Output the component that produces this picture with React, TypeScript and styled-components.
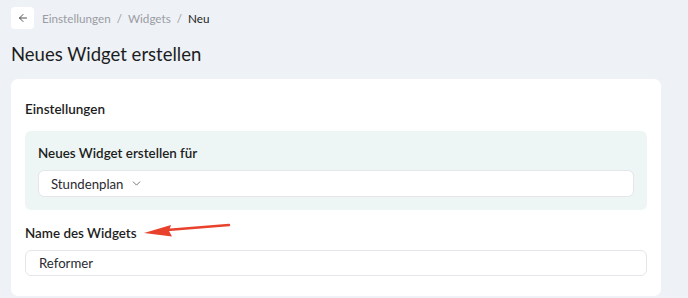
import styled, { createGlobalStyle } from 'styled-components';
import { ArrowLeft, ChevronDown } from 'lucide-react';

const GlobalStyle = createGlobalStyle`
  body {
    margin: 0;
    background: #eef1f6;
    font-family: Lato, "Noto Sans", sans-serif;
    color: #1c1d21;
  }
`;

const Page = styled.div`
  padding: 7px 11px 0;
`;

const TopBar = styled.div`
  display: flex;
  align-items: center;
  gap: 8px;
  height: 22px;
`;

const BackButton = styled.button`
  width: 23px;
  height: 22px;
  border: none;
  border-radius: 4px;
  background: #ffffff;
  display: flex;
  align-items: center;
  justify-content: center;
  padding: 0;
  color: #3a3b40;
`;

const Crumbs = styled.nav`
  display: flex;
  align-items: center;
  gap: 6px;
  font-size: 11.7px;
  color: #9a9ca3;
`;

const Crumb = styled.span<{ $current?: boolean }>`
  color: ${({ $current }) => ($current ? '#1c1d21' : '#9a9ca3')};
`;

const Title = styled.h1`
  margin: 11px 0 0;
  font-size: 18.5px;
  font-weight: 400;
  line-height: 28px;
`;

const Card = styled.section`
  margin-top: 11px;
  width: 650px;
  background: #ffffff;
  border-radius: 7px;
  padding: 21px 14px 20px;
  box-sizing: border-box;
`;

const SectionTitle = styled.h2`
  margin: 0;
  font-size: 13.5px;
  font-weight: 600;
  line-height: 18px;
`;

const Panel = styled.div`
  margin-top: 13px;
  background: #eef6f5;
  border-radius: 6px;
  padding: 13px;
`;

const Label = styled.div`
  font-size: 13.4px;
  font-weight: 600;
  line-height: 18px;
  display: flex;
  align-items: center;
`;

const Select = styled.div`
  margin-top: 8px;
  height: 27px;
  box-sizing: border-box;
  background: #ffffff;
  border: 1px solid #e4e6ea;
  border-radius: 6px;
  padding: 0 12px;
  display: flex;
  align-items: center;
  gap: 7px;
  font-size: 13.2px;
  color: #2a2b30;
`;

const Field = styled.div`
  margin-top: 14px;
`;

const Input = styled.div`
  margin-top: 8px;
  height: 26px;
  box-sizing: border-box;
  background: #ffffff;
  border: 1px solid #e4e6ea;
  border-radius: 6px;
  padding: 0 13px;
  display: flex;
  align-items: center;
  font-size: 13.2px;
  color: #2a2b30;
`;

const Pointer = styled.svg`
  margin-left: 6px;
  margin-top: -4px;
`;

const RedArrow = () => (
  <Pointer width="90" height="16" viewBox="0 0 90 16">
    <path d="M86 2 L24 7" stroke="#e8412c" strokeWidth="2.4" strokeLinecap="round" />
    <path d="M1 10 L28 2 L26 8 L29 13.5 Z" fill="#e8412c" />
  </Pointer>
);

const App = () => (
  <>
    <GlobalStyle />
    <Page>
      <TopBar>
        <BackButton>
          <ArrowLeft size={12} strokeWidth={1.8} />
        </BackButton>
        <Crumbs>
          <Crumb>Einstellungen</Crumb>
          <span>/</span>
          <Crumb>Widgets</Crumb>
          <span>/</span>
          <Crumb $current>Neu</Crumb>
        </Crumbs>
      </TopBar>
      <Title>Neues Widget erstellen</Title>
      <Card>
        <SectionTitle>Einstellungen</SectionTitle>
        <Panel>
          <Label>Neues Widget erstellen für</Label>
          <Select>
            Stundenplan
            <ChevronDown size={13} strokeWidth={1.5} color="#55575d" />
          </Select>
        </Panel>
        <Field>
          <Label>
            Name des Widgets
            <RedArrow />
          </Label>
          <Input>Reformer</Input>
        </Field>
      </Card>
    </Page>
  </>
);

export default App;
